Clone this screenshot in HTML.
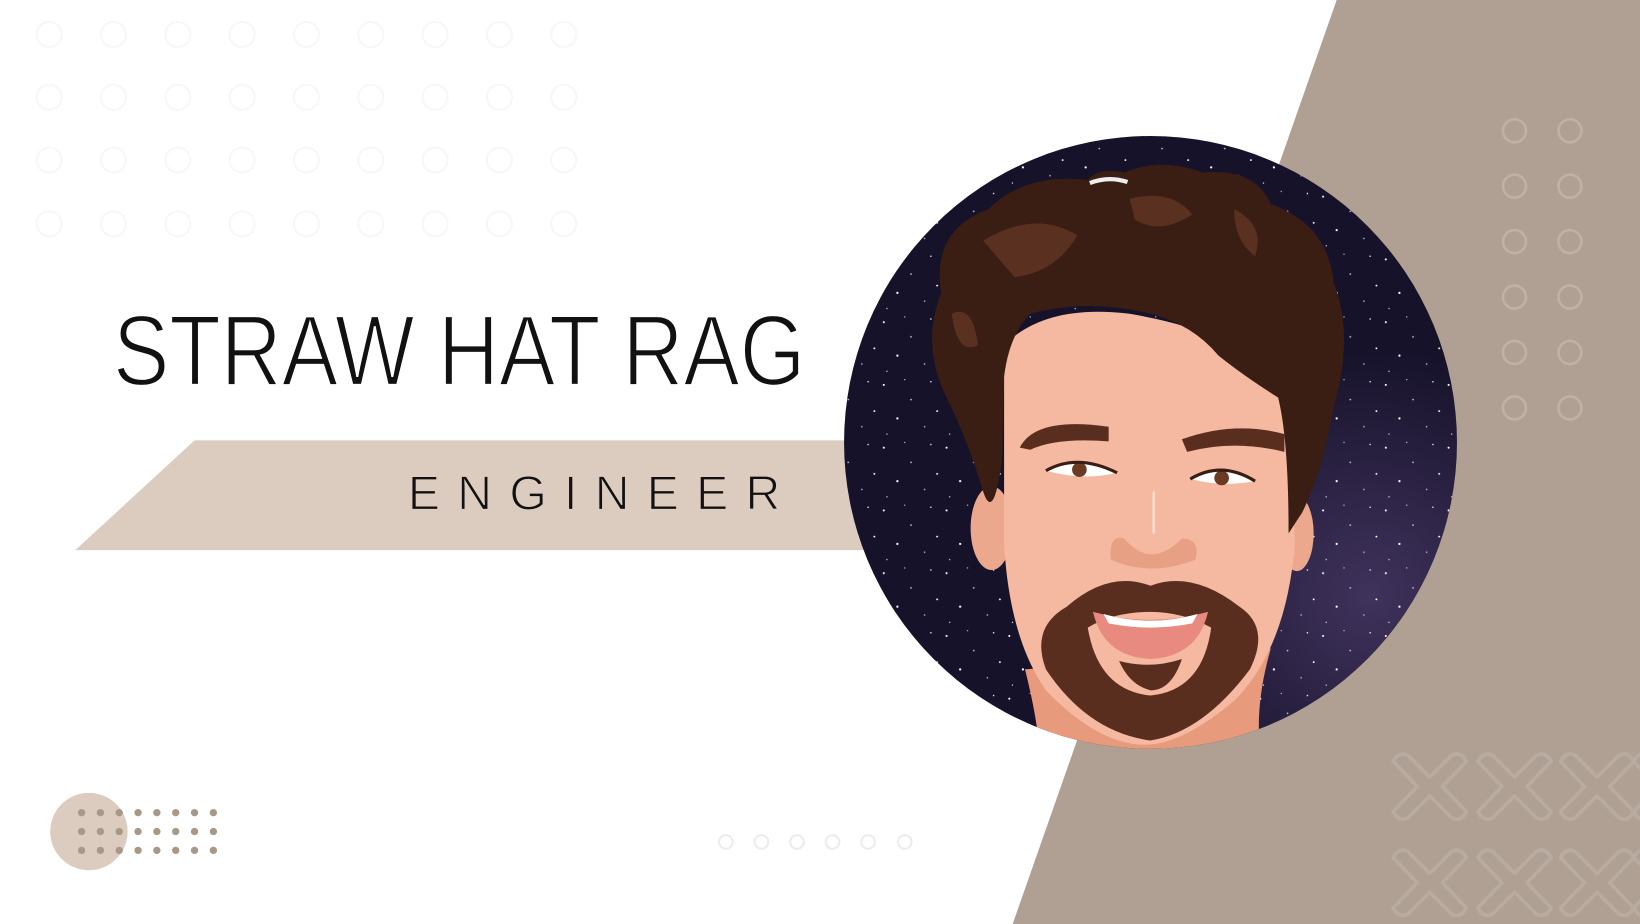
<!DOCTYPE html>
<html><head><meta charset="utf-8"><style>
html,body{margin:0;padding:0;background:#fff;overflow:hidden}
svg{display:block}
</style></head><body>
<svg width="1640" height="924" viewBox="0 0 1568 883.4" xmlns="http://www.w3.org/2000/svg">
<defs>
<clipPath id="cc"><circle cx="1100" cy="423" r="293"/></clipPath>
<radialGradient id="mw" cx="0.85" cy="0.75" r="0.4"><stop offset="0" stop-color="#4a3a68" stop-opacity=".8"/><stop offset="1" stop-color="#4a3a68" stop-opacity="0"/></radialGradient>
<pattern id="stars" width="60" height="60" patternUnits="userSpaceOnUse">
<circle cx="5" cy="8" r="1" fill="#fff"/><circle cx="31" cy="22" r=".8" fill="#cbd"/><circle cx="50" cy="5" r=".7" fill="#fff"/><circle cx="18" cy="40" r="1.1" fill="#fff"/><circle cx="44" cy="48" r=".8" fill="#aac"/><circle cx="8" cy="55" r=".6" fill="#fff"/><circle cx="56" cy="33" r=".9" fill="#fff"/><circle cx="25" cy="3" r=".6" fill="#ccf"/>
</pattern>
</defs>
<rect width="1568" height="884" fill="#fff"/>
<polygon points="1278,0 1568,0 1568,884 968,884" fill="#b0a094"/>
<g fill="none" stroke="#f7f7f7" stroke-width="2">
<g id="row"><circle cx="47" cy="33" r="12"/><circle cx="108.5" cy="33" r="12"/><circle cx="170" cy="33" r="12"/><circle cx="231.5" cy="33" r="12"/><circle cx="293" cy="33" r="12"/><circle cx="354.5" cy="33" r="12"/><circle cx="416" cy="33" r="12"/><circle cx="477.5" cy="33" r="12"/><circle cx="539" cy="33" r="12"/></g>
<use href="#row" y="60"/><use href="#row" y="120"/><use href="#row" y="181"/>
</g>
<g fill="none" stroke="#bfb1a6" stroke-width="2.5">
<g id="rc"><circle cx="1448" cy="125" r="11"/><circle cx="1501" cy="125" r="11"/></g>
<use href="#rc" y="53"/><use href="#rc" y="106"/><use href="#rc" y="159"/><use href="#rc" y="212"/><use href="#rc" y="265"/>
</g>
<g fill="none" stroke="#b8aba0" stroke-width="3.5" stroke-linejoin="round">
<g id="xx"><path id="x1" d="M1332,728 Q1337,718 1346,722 l21,21 l21,-21 Q1397,718 1402,728 l-23,24 l23,24 Q1397,786 1388,782 l-21,-21 l-21,21 Q1337,786 1332,776 l23,-24 z"/>
<use href="#x1" x="81"/><use href="#x1" x="160"/><use href="#x1" x="230"/></g>
<use href="#xx" y="92"/>
</g>
<polygon points="186,421 840,421 840,526 72,526" fill="#dccbbf"/>
<text x="108" y="368" font-family="Liberation Sans, sans-serif" font-size="96" fill="#111" stroke="#fff" stroke-width="2.2" paint-order="fill" textLength="662" lengthAdjust="spacingAndGlyphs">STRAW HAT RAG</text>
<text x="390" y="487" font-family="Liberation Sans, sans-serif" font-size="46" fill="#111" stroke="#dccbbf" stroke-width="1.2" textLength="356" lengthAdjust="spacing">ENGINEER</text>
<g clip-path="url(#cc)">
<rect x="800" y="120" width="600" height="600" fill="#16122a"/>
<rect x="800" y="120" width="600" height="600" fill="url(#mw)"/>
<rect x="800" y="120" width="600" height="600" fill="url(#stars)"/>
<path d="M980,640 Q1000,720 990,740 L1210,740 Q1195,690 1215,620 Z" fill="#e89a7c"/>
<ellipse cx="948" cy="505" rx="20" ry="40" fill="#eca88c"/>
<ellipse cx="1240" cy="510" rx="16" ry="36" fill="#eca88c"/>
<path d="M960,330 Q1000,290 1080,300 Q1200,320 1232,380 L1238,520 Q1230,620 1180,670 Q1130,712 1095,712 Q1050,712 1000,660 Q965,610 960,520 Z" fill="#f4b9a0"/>
<path d="M900,280 Q890,220 945,200 Q980,165 1040,172 Q1050,160 1075,165 Q1110,150 1150,165 Q1200,160 1215,195 Q1270,215 1275,270 Q1295,320 1275,390 Q1265,450 1245,490 L1232,510 Q1232,420 1222,380 Q1190,360 1165,340 Q1140,310 1100,300 Q1040,285 985,300 Q965,320 960,360 L958,440 Q950,500 940,470 Q925,420 905,380 Q880,330 900,280 Z" fill="#3a1e14"/>
<path d="M940,230 Q990,200 1030,225 Q1010,260 970,265 Z M1080,190 Q1120,180 1140,205 Q1110,225 1085,210 Z M1180,200 Q1210,215 1200,245 Q1180,230 1180,200 Z M910,300 Q930,290 935,330 Q915,340 910,300 Z" fill="#5a3020"/>
<path d="M1042,175 Q1060,168 1078,174" stroke="#eee" stroke-width="4" fill="none"/>
<path d="M975,428 Q990,398 1060,408 L1060,422 Q1010,418 985,430 Z" fill="#5a2e1e"/>
<path d="M1130,420 Q1180,402 1228,415 L1228,432 Q1180,420 1135,432 Z" fill="#5a2e1e"/>
<path d="M1000,450 Q1030,433 1068,452 Q1035,460 1000,450 Z" fill="#fff"/>
<circle cx="1032" cy="449" r="7" fill="#6a3a22"/>
<path d="M1000,450 Q1030,433 1068,452" stroke="#3a1e14" stroke-width="3" fill="none"/>
<path d="M1138,458 Q1168,440 1200,460 Q1168,466 1138,458 Z" fill="#fff"/>
<circle cx="1168" cy="457" r="7" fill="#6a3a22"/>
<path d="M1138,458 Q1168,440 1200,460" stroke="#3a1e14" stroke-width="3" fill="none"/>
<path d="M1103,470 L1103,510" stroke="#fde3d6" stroke-width="2"/>
<path d="M1062,535 Q1060,510 1075,515 Q1100,545 1130,515 Q1148,515 1143,535 Q1100,552 1062,535 Z" fill="#e8a085"/>
<path d="M1020,580 Q1060,545 1100,560 Q1140,545 1185,580 Q1215,600 1195,640 Q1150,700 1100,708 Q1040,700 1000,640 Q985,600 1020,580 Z M1040,600 Q1050,660 1100,665 Q1150,660 1158,600 Q1130,585 1100,585 Q1065,585 1040,600 Z" fill="#5a2e1e" fill-rule="evenodd"/>
<path d="M1045,585 Q1100,600 1155,585 Q1145,628 1100,630 Q1055,628 1045,585 Z" fill="#e88a80"/>
<path d="M1055,587 Q1100,600 1145,587 L1140,596 Q1100,604 1060,596 Z" fill="#fff"/>
<path d="M1070,632 Q1100,640 1130,630 Q1120,660 1100,660 Q1080,655 1070,632 Z" fill="#5a2e1e"/>
</g>
<circle cx="85" cy="795" r="37" fill="#dccbbf"/>
<g fill="#a89888">
<g id="dr"><circle cx="78" cy="777" r="3.5"/><circle cx="96" cy="777" r="3.5"/><circle cx="114" cy="777" r="3.5"/><circle cx="132" cy="777" r="3.5"/><circle cx="150" cy="777" r="3.5"/><circle cx="168" cy="777" r="3.5"/><circle cx="186" cy="777" r="3.5"/><circle cx="204" cy="777" r="3.5"/></g>
<use href="#dr" y="18"/><use href="#dr" y="36"/>
</g>
<g fill="none" stroke="#ececec" stroke-width="2">
<circle cx="694" cy="805" r="6.5"/><circle cx="728" cy="805" r="6.5"/><circle cx="762" cy="805" r="6.5"/><circle cx="796" cy="805" r="6.5"/><circle cx="830" cy="805" r="6.5"/><circle cx="865" cy="805" r="6.5"/>
</g>
</svg>
</body></html>
